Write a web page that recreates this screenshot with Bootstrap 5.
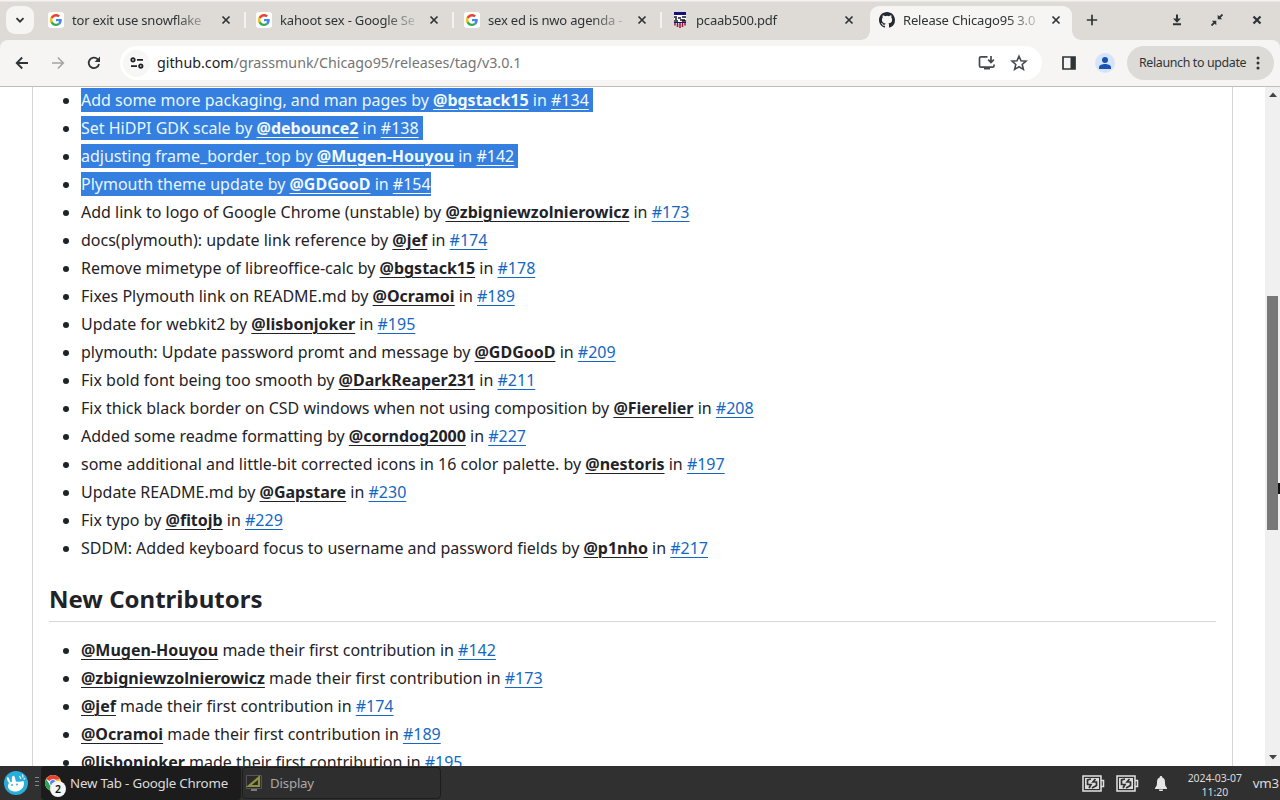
<!DOCTYPE html>
<html lang="en">
<head>
<meta charset="utf-8">
<title>Release Chicago95 3.0.1</title>
<link href="https://cdn.jsdelivr.net/npm/bootstrap@5.3.0/dist/css/bootstrap.min.css" rel="stylesheet">
<style>
body{font-family:"Noto Sans",sans-serif;width:1280px;height:800px;overflow:hidden;color:#1f2328;background:#fff}
svg{display:block;flex:none}
.strip{height:40px;background:linear-gradient(#f4f3f0 0 1px,#dedbd7 2px);color:#2e3436;font-size:13px;letter-spacing:-.18px}
.tabsearch{width:28px;height:28px;border-radius:9px;background:#f6f5f3;margin-left:6px}
.tab-item{width:208px;height:32px;padding-left:10px}
.tab-item .ttl{width:134px;margin-left:8px;white-space:nowrap;line-height:20px;-webkit-mask-image:linear-gradient(90deg,#000 104px,transparent 142px)}
.tab-item .x{margin-left:16px}
.sep{width:2px;height:16px;background:#f4f3f1;margin-left:13px}
.fav{width:16px;height:16px;background:#fff;border-radius:3px}
.tab-on{position:relative;width:202px;height:34px;margin-top:6px;border-radius:9px 9px 0 0;background:#f6f5f3;padding-left:9px;padding-bottom:6px}
.tab-on:before,.tab-on:after{content:"";position:absolute;bottom:0;width:9px;height:9px}
.tab-on:before{left:-9px;background:radial-gradient(circle at 0 0,transparent 8.5px,#f6f5f3 9px)}
.tab-on:after{right:-9px;background:radial-gradient(circle at 100% 0,transparent 8.5px,#f6f5f3 9px)}
.toolbar-wrap{background:#dedbd7}
.tools{height:47px;background:#f6f5f3;border-bottom:1px solid #bebebc;border-radius:8px 8px 0 0}
.omni{width:922px;height:34px;border-radius:17px;background:#fff;margin-left:19px;font-size:14.28px;color:#747474}
.omni b{font-weight:400;color:#1c1c1c}
.relaunch{width:147px;height:34px;border-radius:17px;background:#dddbd7;font-size:12.4px;letter-spacing:-.35px;color:#2e3436;padding-left:12px;white-space:nowrap}
.view{height:679px;overflow:hidden}
.release{width:1201px;margin-left:32px;border:solid #d3d5d7;border-width:0 1px;padding:1px 16px 0;font-size:16px;line-height:24px}
.release ul{padding-left:32px;margin:0}
.release li+li{margin-top:4px}
.release li{white-space:nowrap;height:24px}
.release a{color:#1467c4;text-decoration:underline;text-underline-offset:3.2px;text-decoration-thickness:1px}
.release a.u{color:#1f2328;font-weight:700}
.release .hl{background:#347fe0;display:inline-block;height:24px;color:#e8f6ff}
.release .hl a,.release .hl a.u{color:#f0faff}
.hl.nl{padding-right:4px}
.release h2{font-size:24px;line-height:30px;font-weight:700;padding-bottom:7.2px;border-bottom:1px solid #d3d7da;margin:24px 0 16px}
.sbar{width:15px;background:#f0f0f0}
.thumb{height:234px;width:11px;background:#787878;margin:195px 0 auto 2px}
.pointer-edge{position:absolute;left:1278px;top:482px}
.panelbar{height:34px;background:#303030;color:#dcdcdc;font-size:13.3px;letter-spacing:-.2px;white-space:nowrap}
.panelbar span:not(.count){padding-top:2px}
.task{height:34px;border-radius:4px}
.t1{width:200px;background:#1c1c1c;padding-left:4px}
.t2{width:199px;height:32px;background:#2e2e2e;border:1px solid #1d1d1d;color:#a9a9a9;padding-left:3px;margin-left:1px}
.count{position:absolute;left:5px;top:6px;width:16px;height:16px;border-radius:50%;background:#f5f5f5;color:#111;font-size:10.5px;line-height:16px;text-align:center;font-weight:600}
.clock{font-size:10.5px;letter-spacing:-.05px;line-height:14px;width:60px}
</style>
</head>
<body class="d-flex flex-column">
<svg width="0" height="0" class="position-absolute">
<symbol id="g" viewBox="0 0 48 48"><path fill="#EA4335" d="M24 9.500c3.500 0 6.700 1.200 9.200 3.600l6.900-6.900C35.900 2.400 30.500 0 24 0 14.600 0 6.500 5.400 2.600 13.200l8 6.200C12.400 13.700 17.700 9.500 24 9.500z"/><path fill="#4285F4" d="M47 24.600c0-1.600-.2-3.100-.4-4.600H24v9h12.900c-.6 3-2.200 5.500-4.700 7.200l7.700 6C44.400 38 47 31.800 47 24.600z"/><path fill="#FBBC05" d="M10.500 28.600a14.500 14.500 0 0 1 0-9.200l-8-6.200a24 24 0 0 0 0 21.600z"/><path fill="#34A853" d="M24 48c6.500 0 11.900-2.100 15.900-5.800l-7.700-6c-2.200 1.500-4.900 2.300-8.200 2.300-6.300 0-11.600-4.200-13.500-9.900l-8 6.200C6.500 42.600 14.600 48 24 48z"/></symbol>
<symbol id="x" viewBox="0 0 10 10"><path d="M1.500 1.500l7 7M8.500 1.500l-7 7" stroke="#2e3436" stroke-width="1.700"/></symbol>
<symbol id="bat" viewBox="0 0 23 17"><path d="M1 1h18v15H1zM19.500 5.500h2v6h-2" fill="none" stroke="#e2e2e2" stroke-width="1.500"/><path d="M3 3h14v11H3z" fill="#dcdcdc"/><path d="M9 4L5.500 5v4.500H9L7 13M10 13l4.500-2.500V7H11l2.500-3" fill="none" stroke="#303030" stroke-width="1.700"/></symbol>
</svg>

<div class="strip d-flex align-items-center">
  <div class="tabsearch d-flex align-items-center justify-content-center"><svg width="10" height="10" viewBox="0 0 10 10"><path d="M1.500 3.200L5 6.700l3.500-3.500" fill="none" stroke="#2e3436" stroke-width="1.800"/></svg></div>
  <div class="d-flex ms-1">
    <div class="tab-item d-flex align-items-center"><div class="fav"><svg width="16" height="16" viewBox="0 0 16 16"><use href="#g" x="2" y="1.500" width="12" height="13"/></svg></div><div class="ttl">tor exit use snowflake</div><svg class="x" width="10" height="10"><use href="#x"/></svg><div class="sep"></div></div>
    <div class="tab-item d-flex align-items-center"><div class="fav"><svg width="16" height="16" viewBox="0 0 16 16"><use href="#g" x="2" y="1.500" width="12" height="13"/></svg></div><div class="ttl">kahoot sex - Google Se</div><svg class="x" width="10" height="10" style="margin-left:15px"><use href="#x"/></svg><div class="sep"></div></div>
    <div class="tab-item d-flex align-items-center"><div class="fav"><svg width="16" height="16" viewBox="0 0 16 16"><use href="#g" x="2" y="1.500" width="12" height="13"/></svg></div><div class="ttl">sex ed is nwo agenda -</div><svg class="x" width="10" height="10" style="margin-left:15px"><use href="#x"/></svg><div class="sep"></div></div>
    <div class="tab-item d-flex align-items-center"><svg width="16" height="16" viewBox="0 0 16 16"><path fill="#fff" d="M2 0h12v12H2z"/><path fill="#14117a" d="M2 0h12v3H2z"/><path d="M2 5h3M6 6h3M10 5h4M3 7h2M8 8h5M2 9h4M10 9h4" stroke="#181828" stroke-width="1.300"/><path d="M3 11v2.500M5.500 11v4M8 11v5M10.500 11v4M13 11v2.500" stroke="#9c1434" stroke-width="1.500"/><path d="M2 10.500h12" stroke="#14117a"/></svg><div class="ttl">pcaab500.pdf</div><svg class="x" width="10" height="10" style="margin-left:14px"><use href="#x"/></svg></div>
  </div>
  <div class="tab-on d-flex align-items-center"><svg width="16" height="16" viewBox="0 0 16 16"><path fill="#24292f" d="M8 0C3.580 0 0 3.580 0 8c0 3.540 2.290 6.530 5.470 7.590.4.070.55-.17.55-.38 0-.19-.010-.82-.010-1.490-2.010.37-2.530-.49-2.690-.94-.09-.23-.48-.94-.82-1.130-.28-.15-.68-.52-.010-.53.63-.010 1.080.58 1.230.82.72 1.210 1.870.87 2.330.66.070-.52.28-.87.51-1.070-1.780-.2-3.640-.89-3.640-3.950 0-.87.31-1.590.82-2.150-.08-.2-.36-1.020.08-2.120 0 0 .67-.21 2.200.82a7.600 7.600 0 0 1 4 0c1.530-1.040 2.200-.82 2.200-.82.44 1.100.16 1.920.08 2.120.51.56.82 1.270.82 2.150 0 3.070-1.870 3.750-3.650 3.950.29.25.54.73.54 1.480 0 1.070-.010 1.930-.010 2.200 0 .21.15.46.55.38A8.010 8.010 0 0 0 16 8c0-4.420-3.580-8-8-8z"/></svg><div class="tab-item p-0 d-flex align-items-center" style="width:170px"><div class="ttl">Release Chicago95 3.0</div><svg class="x" width="10" height="10" style="margin-left:14px"><use href="#x"/></svg></div></div>
  <svg width="12" height="12" viewBox="0 0 12 12" style="margin-left:14px"><path d="M6 .8v10.400M.8 6h10.400" stroke="#2e3436" stroke-width="1.700"/></svg>
  <svg width="10" height="12" viewBox="0 0 10 12" style="margin-left:74px"><path d="M5 .5V6M1 10.200h8" stroke="#2e3436" stroke-width="2"/><path d="M1 4.500h8L5 8.800z" fill="#2e3436"/></svg>
  <svg width="12" height="12" viewBox="0 0 12 12" style="margin-left:29px"><path d="M11.500.5L8 4M.5 11.500L4 8" stroke="#2e3436" stroke-width="1.800"/><path d="M6.700.8v4.500h4.500zM5.300 11.200V6.700H.8z" fill="#2e3436"/></svg>
  <svg width="10" height="10" viewBox="0 0 10 10" style="margin-left:29px"><path d="M1.500 1.500l7 7M8.500 1.500l-7 7" stroke="#2e3436" stroke-width="2.200"/></svg>
</div>

<div class="toolbar-wrap"><div class="tools d-flex align-items-center">
  <svg width="14" height="14" viewBox="0 0 14 14" style="margin-left:15px"><path d="M13 7H2M7.200 1.500L1.700 7l5.500 5.500" fill="none" stroke="#2e3436" stroke-width="1.800"/></svg>
  <svg width="14" height="14" viewBox="0 0 14 14" style="margin-left:22px"><path d="M1 7h11M6.800 1.500L12.300 7l-5.500 5.500" fill="none" stroke="#a3a5a5" stroke-width="1.600"/></svg>
  <svg width="14" height="14" viewBox="0 0 14 14" style="margin-left:22px"><path d="M12 8a5.200 5.200 0 1 1-1.300-4.700L12 4.600" fill="none" stroke="#2e3436" stroke-width="1.800"/><path d="M13 .6v5.300H7.700z" fill="#2e3436"/></svg>
  <div class="omni d-flex align-items-center"><div class="rounded-circle d-flex align-items-center justify-content-center" style="width:27px;height:27px;margin-left:3px;background:#f7f7f6"><svg width="14" height="12" viewBox="0 0 14 12"><g fill="none" stroke="#202124" stroke-width="1.800"><circle cx="3" cy="2.900" r="1.700"/><path d="M7 2.900h6M1 9.100h6"/><circle cx="10.800" cy="9.100" r="1.700"/></g></svg></div><span style="margin-left:7px;margin-top:-1px"><b>github.com</b>/grassmunk/Chicago95/releases/tag/v3.0.1</span>
    <svg class="ms-auto" width="18" height="16" viewBox="0 0 18 16"><path d="M9.500 1.800H3a1.500 1.500 0 0 0-1.500 1.500v7.400A1.500 1.500 0 0 0 3 12.200h11.500a1.500 1.500 0 0 0 1.500-1.500V9.500M13 1v6M10.200 4.700L13 7.500l2.800-2.800" fill="none" stroke="#45494b" stroke-width="1.700"/><path d="M6 12h6v2.500H6z" fill="#45494b"/></svg>
    <svg width="18" height="18" viewBox="0 0 18 18" style="margin:0 14px 0 14px"><path d="M9 2.200l2 4.600 5 .4-3.800 3.300 1.200 4.900L9 12.800l-4.400 2.600 1.200-4.900L2 7.200l5-.4z" fill="none" stroke="#45494b" stroke-width="1.600"/></svg></div>
  <svg width="14" height="14" viewBox="0 0 14 14" style="margin-left:20px"><path d="M1 1h12v12H1z" fill="none" stroke="#2e3436" stroke-width="1.700"/><path d="M8.500 1H13v12H8.500z" fill="#2e3436"/></svg>
  <svg width="20" height="20" viewBox="0 0 20 20" style="margin-left:19px"><circle cx="10" cy="10" r="10" fill="#d6e4fb"/><circle cx="10" cy="7" r="3" fill="#1a52b0"/><path d="M4 16v-1.800c0-2.300 3.500-3.200 6-3.200s6 .9 6 3.200V16z" fill="#1a52b0"/></svg>
  <div class="relaunch d-flex align-items-center" style="margin-left:12px"><span style="width:107px">Relaunch to update</span><svg width="4" height="14" viewBox="0 0 4 14" style="margin-left:10px"><g fill="#2e3436"><circle cx="2" cy="2" r="1.500"/><circle cx="2" cy="7" r="1.500"/><circle cx="2" cy="12" r="1.500"/></g></svg></div>
</div></div>

<div class="view d-flex justify-content-between">
  <main class="release">
    <ul>
      <li><span class="hl nl">Add some more packaging, and man pages by <a class="u" href="#">@bgstack15</a> in <a href="#">#134</a></span></li>
      <li><span class="hl nl">Set HiDPI GDK scale by <a class="u" href="#">@debounce2</a> in <a href="#">#138</a></span></li>
      <li><span class="hl nl">adjusting frame_border_top by <a class="u" href="#">@Mugen-Houyou</a> in <a href="#">#142</a></span></li>
      <li><span class="hl">Plymouth theme update by <a class="u" href="#">@GDGooD</a> in <a href="#">#154</a></span></li>
      <li>Add link to logo of Google Chrome (unstable) by <a class="u" href="#">@zbigniewzolnierowicz</a> in <a href="#">#173</a></li>
      <li>docs(plymouth): update link reference by <a class="u" href="#">@jef</a> in <a href="#">#174</a></li>
      <li>Remove mimetype of libreoffice-calc by <a class="u" href="#">@bgstack15</a> in <a href="#">#178</a></li>
      <li>Fixes Plymouth link on README.md by <a class="u" href="#">@Ocramoi</a> in <a href="#">#189</a></li>
      <li>Update for webkit2 by <a class="u" href="#">@lisbonjoker</a> in <a href="#">#195</a></li>
      <li>plymouth: Update password promt and message by <a class="u" href="#">@GDGooD</a> in <a href="#">#209</a></li>
      <li>Fix bold font being too smooth by <a class="u" href="#">@DarkReaper231</a> in <a href="#">#211</a></li>
      <li>Fix thick black border on CSD windows when not using composition by <a class="u" href="#">@Fierelier</a> in <a href="#">#208</a></li>
      <li>Added some readme formatting by <a class="u" href="#">@corndog2000</a> in <a href="#">#227</a></li>
      <li>some additional and little-bit corrected icons in 16 color palette. by <a class="u" href="#">@nestoris</a> in <a href="#">#197</a></li>
      <li>Update README.md by <a class="u" href="#">@Gapstare</a> in <a href="#">#230</a></li>
      <li>Fix typo by <a class="u" href="#">@fitojb</a> in <a href="#">#229</a></li>
      <li>SDDM: Added keyboard focus to username and password fields by <a class="u" href="#">@p1nho</a> in <a href="#">#217</a></li>
    </ul>
    <h2>New Contributors</h2>
    <ul>
      <li><a class="u" href="#">@Mugen-Houyou</a> made their first contribution in <a href="#">#142</a></li>
      <li><a class="u" href="#">@zbigniewzolnierowicz</a> made their first contribution in <a href="#">#173</a></li>
      <li><a class="u" href="#">@jef</a> made their first contribution in <a href="#">#174</a></li>
      <li><a class="u" href="#">@Ocramoi</a> made their first contribution in <a href="#">#189</a></li>
      <li><a class="u" href="#">@lisbonjoker</a> made their first contribution in <a href="#">#195</a></li>
    </ul>
  </main>
  <div class="sbar d-flex flex-column">
    <svg width="15" height="14" viewBox="0 0 15 14"><path d="M4 10l4-4.500 4 4.500z" fill="#444"/></svg>
    <div class="thumb"></div>
    <svg width="15" height="14" viewBox="0 0 15 14"><path d="M4 3l4 4.500L12 3z" fill="#444"/></svg>
  </div>
</div>
<svg class="pointer-edge" width="2" height="14"><path d="M0 1h2v11H0z" fill="#111"/></svg>

<footer class="panelbar d-flex align-items-center">
  <svg width="24" height="24" viewBox="0 0 24 24" style="margin-left:4px"><circle cx="12" cy="12" r="12" fill="#27aedd"/><path d="M3 6.500c1-1 2.500.5 3.300 4.500l1.700-.3C7.500 7.500 8 5 9.200 4.800c1.600-.2 2.200 3.200 2.600 5.700 3.200.5 5.500.4 7.700-.5 1.500 4-.5 9.500-7 10.500-5.500.5-9-2.500-8.500-6 .1-1 .6-1.800 1-2.500C3.500 10 2.500 7.500 3 6.500z" fill="#fff"/><path d="M15.500 5l1.500 3M18.500 3.500l.5 3M20.500 7l-.5 1.500" stroke="#e8f8ff" stroke-width="1.200"/><circle cx="8" cy="14" r=".9" fill="#27aedd"/><circle cx="13" cy="13.500" r=".9" fill="#27aedd"/></svg>
  <svg width="4" height="12" viewBox="0 0 4 12" style="margin:-2px 0 0 7px"><path d="M0 1.500h4M0 5.500h4M0 9.500h4" stroke="#888"/></svg>
  <div class="task t1 d-flex align-items-center" style="margin-left:2px"><div class="position-relative"><svg width="16" height="16" viewBox="0 0 16 16"><circle cx="8" cy="8" r="8" fill="#fff"/><path d="M8 8L1.100 4A8 8 0 0 1 14.900 4z" fill="#e44335"/><path d="M8 4.500h7.200A8 8 0 0 1 8 16l3.500-6z" fill="#fbc116"/><path d="M1.100 4A8 8 0 0 0 8 16l3.100-6H5z" fill="#2fa24f"/><circle cx="8" cy="8" r="3.700" fill="#fff"/><circle cx="8" cy="8" r="2.900" fill="#4285f4"/></svg><span class="count">2</span></div><span style="margin-left:9px">New Tab - Google Chrome</span></div>
  <div class="task t2 d-flex align-items-center"><svg width="16" height="16" viewBox="0 0 16 16"><path d="M.5.500h15v13H.5z" fill="#2a2a26" stroke="#555"/><path d="M13 2.500V11H3z" fill="none" stroke="#8d9146" stroke-width="2.200"/><path d="M5 15h6" stroke="#999" stroke-width="1.500"/></svg><span style="margin-left:8px">Display</span></div>
  <div class="ms-auto d-flex align-items-center">
    <svg width="23" height="17"><use href="#bat"/></svg>
    <svg width="23" height="17" style="margin-left:11px"><use href="#bat"/></svg>
    <svg width="12" height="15" viewBox="0 0 12 15" style="margin-left:16px"><path d="M6 0c1 0 1.300.6 1.300 1.400C9.500 2 10 4 10 6.500c0 2.500.5 4 2 5.500v1H0v-1c1.500-1.500 2-3 2-5.500C2 4 2.500 2 4.700 1.400 4.700.600 5 0 6 0z" fill="#e6e6e6"/><path d="M4 13.500h4a2 2 0 0 1-4 0z" fill="#e6e6e6"/></svg>
    <div class="clock text-center pt-1" style="margin-left:18px">2024-03-07<br>11:20</div>
    <span style="margin-left:8px;margin-right:1px">vm3</span>
  </div>
</footer>
<script src="https://cdn.jsdelivr.net/npm/bootstrap@5.3.0/dist/js/bootstrap.bundle.min.js"></script>
</body>
</html>
